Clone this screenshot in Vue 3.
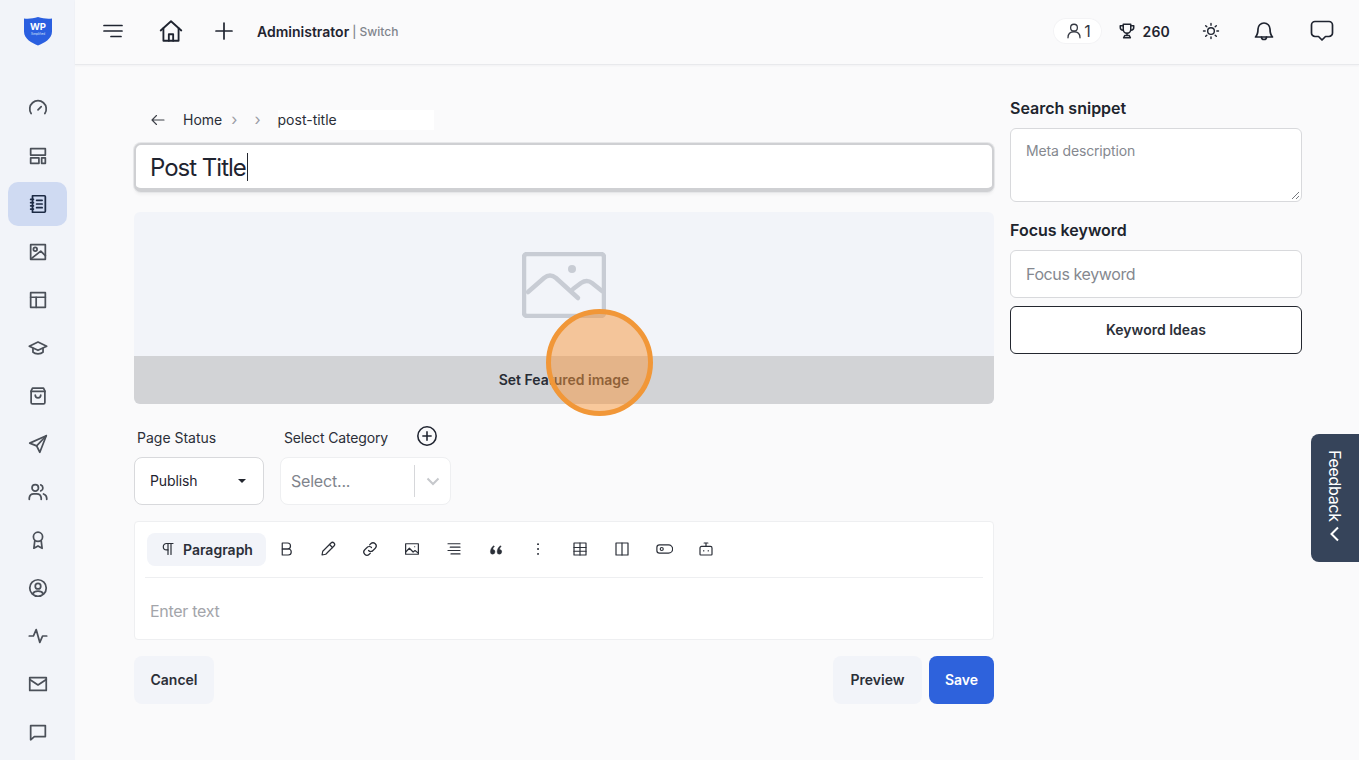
<script setup>
const navIcons = [
  ['M4.5 18a9 9 0 1 1 15 0', 'M12 14l3.5-3.5'],
  ['M4 4h16v7H4z', 'M4 14h9v6H4z', 'M16 14h4v6h-4z'],
  ['M6 3h13a1 1 0 0 1 1 1v16a1 1 0 0 1-1 1H6z', 'M4 7h3M4 10.5h3M4 14h3M4 17.5h3', 'M10.5 8h6M10.5 12h6M10.5 16h6'],
  ['M4 4h16v16H4z', 'M5 19L15 11l5 5', 'M9 9m-2 0a2 2 0 1 0 4 0a2 2 0 1 0-4 0'],
  ['M4 4h16v16H4z', 'M4 9h16', 'M10 9v11'],
  ['M2.5 10L12 5.5l9.5 4.500-9.5 4.500z', 'M6.5 12.500v4c2.500 2.500 8.500 2.500 11 0v-4'],
  ['M4.5 6.500L6 3.500h12l1.500 3V19a1.500 1.500 0 0 1-1.500 1.500H6A1.500 1.500 0 0 1 4.500 19z', 'M4.500 7h15', 'M9 11a3 3 0 0 0 6 0'],
  ['M3 11L21 3l-7 18-3.5-7z', 'M10.5 14L21 3'],
  ['M9 11a3.500 3.500 0 1 0 0-7a3.500 3.500 0 0 0 0 7z', 'M2.500 20v-1.500a5 5 0 0 1 5-4.500h3a5 5 0 0 1 5 4.500V20', 'M15 4.200a3.500 3.500 0 0 1 0 6.600', 'M18 14.200a5 5 0 0 1 3.500 4.300V20'],
  ['M12 13.500a5 5 0 1 0 0-10a5 5 0 0 0 0 10z', 'M8.500 13l-1 8 4.500-2.500 4.500 2.500-1-8'],
  ['M12 21a9 9 0 1 0 0-18a9 9 0 0 0 0 18z', 'M12 13a3 3 0 1 0 0-6a3 3 0 0 0 0 6z', 'M6.500 18c1-2 3-2.500 5.500-2.500s4.500.5 5.500 2.500'],
  ['M2.500 12h4.500l3-7 4 14 3-7h4.500'],
  ['M3 5h18v14H3z', 'M3 7l9 6 9-6'],
  ['M4 5h16v12H8l-4 3.500z'],
]
const activeNav = 2

const toolbarIcons = [
  { label: 'Bold', paths: ['M7 4h7a4 4 0 0 1 0 8H7z', 'M7 12h8a4 4 0 0 1 0 8H7z'] },
  { label: 'Highlight', paths: ['M4 20l1-5L16 4a2.100 2.100 0 0 1 4 4L9 19z', 'M14 6l4 4'] },
  { label: 'Link', paths: ['M10 14a4 4 0 0 0 6 0l3-3a4 4 0 0 0-6-6l-1.500 1.500', 'M14 10a4 4 0 0 0-6 0l-3 3a4 4 0 0 0 6 6l1.500-1.500'] },
  { label: 'Image', paths: ['M3.500 5h17v14h-17z', 'M3.500 16l5-5 5 5 2.500-2 4.500 3.500', 'M15.500 9h.1'] },
  { label: 'Align', paths: ['M4 5h16M7 9.500h13M4 14h16M8 18.500h12'] },
  { label: 'Quote', fill: true, paths: ['M10.500 16a3 3 0 0 1-6 0c0-4 2-7 4.500-8.500l1 1.200C8.500 10 8 11 7.900 12.500a3 3 0 0 1 2.600 3.500z', 'M19.500 16a3 3 0 0 1-6 0c0-4 2-7 4.500-8.500l1 1.200c-1.500 1.300-2 2.300-2.100 3.800a3 3 0 0 1 2.600 3.500z'] },
  { label: 'More', paths: ['M12 5.500h.1M12 12h.1M12 18.500h.1'], heavy: true },
  { label: 'Table', paths: ['M4 4h16v16H4z', 'M4 10h16M4 15h16', 'M12 4v16'] },
  { label: 'Columns', paths: ['M4 4h16v16H4z', 'M12 4v16'] },
  { label: 'Button', paths: ['M6 6.500h12a5 5 0 0 1 0 11H6a3.500 3.500 0 0 1-3.500-3.500v-4A3.500 3.500 0 0 1 6 6.500z', 'M9 12m-2 0a2 2 0 1 0 4 0a2 2 0 1 0-4 0'] },
  { label: 'AI', paths: ['M6 8.500h12a2 2 0 0 1 2 2V19a1 1 0 0 1-1 1H5a1 1 0 0 1-1-1v-8.500a2 2 0 0 1 2-2z', 'M12 8.500V4.500', 'M9.500 4h5', 'M9 14v.5M15 14v.5'] },
]
</script>

<template>
  <div class="shell">
    <aside class="sidebar">
      <div class="logo">
        <svg width="30" height="30" viewBox="0 0 30 30" aria-label="WP">
          <path d="M1 2.500C6 3 10 2.500 15 1c5 1.500 9 2 14 1.500v13C29 23 21 27 15 29.500 9 27 1 23 1 15.500z" fill="#2a5fe0" />
          <text x="15" y="14" class="logo-big">WP</text>
          <text x="15" y="18.500" class="logo-small">Simplified</text>
        </svg>
      </div>
      <nav class="nav">
        <a v-for="(paths, i) in navIcons" :key="i" class="nav-item" :class="{ active: i === activeNav }">
          <svg width="22" height="22" viewBox="0 0 24 24" class="line-icon">
            <path v-for="d in paths" :key="d" :d="d" />
          </svg>
        </a>
      </nav>
    </aside>

    <div class="page">
      <header class="topbar">
        <div class="top-left">
          <svg class="line-icon thin" width="24" height="24" viewBox="0 0 24 24">
            <path d="M3 6.500h18M3 12h18M10 17.500h10" />
          </svg>
          <svg class="home-icon line-icon thin" width="24" height="24" viewBox="0 0 24 24">
            <path d="M2.500 11.500L12 3l9.500 8.500" />
            <path d="M5 9.500V21h14V9.500" />
            <path d="M10 21v-6h4v6" />
          </svg>
          <svg class="plus-icon line-icon thin" width="24" height="24" viewBox="0 0 24 24">
            <path d="M12 4v16M4 12h16" />
          </svg>
          <span class="admin">Administrator</span>
          <span class="switch">| Switch</span>
        </div>
        <div class="top-right">
          <span class="pill">
            <svg class="line-icon thin" width="18" height="18" viewBox="0 0 24 24">
              <path d="M12 12a4.500 4.500 0 1 0 0-9a4.500 4.500 0 0 0 0 9z" />
              <path d="M4 21c0-5 3-8 8-8s8 3 8 8" />
            </svg>
            <span>1</span>
          </span>
          <span class="score">
            <svg class="line-icon" width="18" height="18" viewBox="0 0 24 24">
              <path d="M7 3h10v7a5 5 0 0 1-10 0z" />
              <path d="M7 5H3v2a4 4 0 0 0 4 4M17 5h4v2a4 4 0 0 1-4 4" />
              <path d="M12 15v3M7.500 21h9l-1.500-3H9z" />
            </svg>
            <span>260</span>
          </span>
          <svg class="sun-icon line-icon" width="20" height="20" viewBox="0 0 24 24">
            <path d="M12 16a4 4 0 1 0 0-8a4 4 0 0 0 0 8z" />
            <path d="M12 3v2M12 19v2M3 12h2M19 12h2M5.600 5.600L7 7M17 17l1.400 1.400M5.600 18.400L7 17M17 7l1.400-1.400" />
          </svg>
          <svg class="bell-icon line-icon thin" width="24" height="24" viewBox="0 0 24 24">
            <path d="M3.500 18c2-2 2.500-3.500 2.500-8a6 6 0 0 1 12 0c0 4.500.5 6 2.500 8z" />
            <path d="M9.500 18a2.500 2.500 0 0 0 5 0" />
          </svg>
          <svg class="chat-icon line-icon thin" width="26" height="26" viewBox="0 0 26 26">
            <path d="M6 3.500h14a3.500 3.500 0 0 1 3.500 3.500v8a3.500 3.500 0 0 1-3.500 3.500h-3.500L13 22l-3.500-3.500H6A3.500 3.500 0 0 1 2.500 15V7A3.500 3.500 0 0 1 6 3.500z" />
          </svg>
        </div>
      </header>

      <main class="content">
        <section class="editor">
          <div class="crumbs">
            <svg class="line-icon crumb-back" width="18" height="18" viewBox="0 0 24 24">
              <path d="M20 12H4M10 6l-6 6 6 6" />
            </svg>
            <span class="crumb">Home</span>
            <span class="chev">›</span>
            <span class="chev second">›</span>
            <span class="slug">post-title</span>
          </div>

          <div class="title-input">Post Title<i class="caret" /></div>

          <div class="featured">
            <div class="featured-art">
              <svg width="84" height="66" viewBox="0 0 84 66" class="art-icon">
                <rect x="2" y="2" width="80" height="62" rx="3" />
                <path d="M6 40L22 26q6-5 12 0l22 20" />
                <path d="M51 37l8-6q6-4 11 0l10 8" />
                <circle cx="50" cy="17" r="4" fill="#c8ccd4" stroke="none" />
              </svg>
            </div>
            <div class="featured-bar">Set Featured image</div>
            <div class="pointer" />
          </div>

          <div class="selectors">
            <div class="field status">
              <label>Page Status</label>
              <div class="status-select"><span>Publish</span><b class="arrow" /></div>
            </div>
            <div class="field category">
              <div class="cat-head">
                <label>Select Category</label>
                <svg class="line-icon thin" width="22" height="22" viewBox="0 0 24 24">
                  <circle cx="12" cy="12" r="10" />
                  <path d="M12 7.500v9M7.500 12h9" />
                </svg>
              </div>
              <div class="cat-select">
                <span>Select...</span>
                <i class="divider" />
                <svg class="cat-chevron" width="20" height="20" viewBox="0 0 20 20">
                  <path d="M4.500 7.500L10 13l5.500-5.500" />
                </svg>
              </div>
            </div>
          </div>

          <div class="body-box">
            <div class="toolbar">
              <button class="para">
                <svg class="line-icon para-mark" width="14" height="14" viewBox="0 0 14 14">
                  <path d="M12 1.500H5.500a3.200 3.200 0 0 0 0 6.400H7" />
                  <path d="M7 1.500v11M10 1.500v11" />
                </svg>
                <span>Paragraph</span>
              </button>
              <span v-for="tool in toolbarIcons" :key="tool.label" class="tool" :title="tool.label">
                <svg width="18" height="18" viewBox="0 0 24 24" class="line-icon" :class="{ solid: tool.fill, heavy: tool.heavy }">
                  <path v-for="d in tool.paths" :key="d" :d="d" />
                </svg>
              </span>
            </div>
            <div class="body-text">Enter text</div>
          </div>

          <div class="actions">
            <button class="btn soft">Cancel</button>
            <div class="spacer" />
            <button class="btn soft preview">Preview</button>
            <button class="btn primary">Save</button>
          </div>
        </section>

        <aside class="seo">
          <h3>Search snippet</h3>
          <div class="meta">Meta description
            <svg class="grip" width="10" height="10" viewBox="0 0 10 10"><path d="M9 2L2 9M9 6L6 9" /></svg>
          </div>
          <h3 class="second">Focus keyword</h3>
          <div class="keyword">Focus keyword</div>
          <button class="ideas">Keyword Ideas</button>
        </aside>
      </main>
    </div>

    <div class="feedback">
      <span>Feedback</span>
      <svg width="18" height="18" viewBox="0 0 18 18"><path d="M12 2.500L5.500 9l6.500 6.500" /></svg>
    </div>
  </div>
</template>

<style>
html, body { margin: 0; background: #fafafb; }
</style>

<style scoped>
.shell {
  display: flex;
  height: 760px;
  overflow: hidden;
  position: relative;
  font-family: Inter, "Liberation Sans", sans-serif;
  color: #1f2430;
  background: #fafafb;
}
.sidebar {
  width: 75px;
  flex: none;
  background: #f2f4f9;
  display: flex;
  flex-direction: column;
  align-items: center;
}
.logo {
  height: 86px;
  width: 100%;
  display: flex;
  justify-content: center;
  padding-top: 16px;
  box-sizing: border-box;
}
.logo-big { font: 700 9.5px Inter, sans-serif; fill: #fff; text-anchor: middle; }
.logo-small { font: 400 3px Inter, sans-serif; fill: #dfe7fb; text-anchor: middle; }
.nav { display: flex; flex-direction: column; }
.nav-item {
  width: 59px;
  height: 44px;
  margin-bottom: 4px;
  border-radius: 10px;
  display: flex;
  align-items: center;
  justify-content: center;
}
.nav-item.active { background: #cfdaf2; }
.nav-item svg { stroke: #4b5059; stroke-width: 1.9; }
.nav-item.active svg { stroke: #1c2a44; }
.line-icon {
  fill: none;
  stroke: currentColor;
  stroke-width: 2;
  stroke-linecap: round;
  stroke-linejoin: round;
  display: block;
}
.line-icon.thin { stroke-width: 1.7; }
.line-icon.solid { fill: currentColor; stroke-width: 0.5; }
.line-icon.heavy { stroke-width: 2.6; }

.page { flex: 1; min-width: 0; }
.topbar {
  height: 65px;
  box-sizing: border-box;
  border-bottom: 1px solid #e8e9ec;
  box-shadow: 0 1px 2px rgba(30, 35, 50, 0.04);
  display: flex;
  align-items: center;
  justify-content: space-between;
  padding: 0 24px 2px 26px;
}
.top-left, .top-right { display: flex; align-items: center; }
.home-icon { margin-left: 33px; width: 26px; height: 26px; }
.plus-icon { margin-left: 28px; }
.admin { margin-left: 21px; font-size: 14px; font-weight: 600; }
.switch { margin-left: 3px; font-size: 12px; font-weight: 500; color: #80848c; margin-top: 1px; }
.pill {
  background: #fff;
  border-radius: 13px;
  height: 26px;
  width: 49px;
  box-sizing: border-box;
  display: flex;
  align-items: center;
  justify-content: center;
  gap: 1px;
  font-size: 16px;
  color: #343842;
  box-shadow: inset 0 0 0 1px #f3f3f5;
}
.score {
  margin-left: 16px;
  display: flex;
  align-items: center;
  gap: 6px;
  font-size: 14px;
  letter-spacing: 0.2px;
  font-weight: 600;
}
.sun-icon { margin-left: 31px; stroke-width: 1.7; }
.bell-icon { margin-left: 31px; }
.chat-icon { margin-left: 33px; }

.content {
  display: flex;
  align-items: flex-start;
  gap: 16px;
  padding: 0 57px 0 59px;
}
.editor { width: 860px; flex: none; }
.crumbs {
  height: 78px;
  padding-top: 45px;
  box-sizing: border-box;
  display: flex;
  align-items: flex-start;
  font-size: 14px;
  line-height: 20px;
  color: #2b2f38;
}
.crumb-back { margin: 1px 0 0 15px; stroke-width: 1.5; color: #3c4048; }
.crumb { margin-left: 16px; }
.chev { margin-left: 9px; color: #9a9da5; font-size: 16px; line-height: 18px; }
.chev.second { margin-left: 17px; }
.slug {
  margin-left: 17px;
  width: 156px;
  background: #fff;
  box-sizing: border-box;
  height: 20px;
}
.title-input {
  height: 49px;
  box-sizing: border-box;
  background: #fff;
  border: 2px solid #cfd0d3;
  border-bottom-width: 4px;
  border-radius: 7px;
  box-shadow: 0 0 0 1px #e6e7e9, 0 3px 3px rgba(0, 0, 0, 0.04);
  padding: 1px 0 0 14px;
  font-size: 24px;
  letter-spacing: -1px;
  display: flex;
  align-items: center;
}
.caret {
  display: inline-block;
  width: 1px;
  height: 28px;
  background: #23272f;
  margin-left: 1px;
}
.featured {
  margin-top: 20px;
  height: 192px;
  border-radius: 6px;
  position: relative;
  background: #f2f4f9;
  display: flex;
  flex-direction: column;
}
.featured-art {
  height: 144px;
  box-sizing: border-box;
  padding: 40px 0 0 0;
  display: flex;
  justify-content: center;
}
.art-icon { fill: none; stroke: #c8ccd4; stroke-width: 4.5; stroke-linecap: round; stroke-linejoin: round; }
.featured-bar {
  height: 48px;
  background: #d2d3d6;
  border-radius: 0 0 6px 6px;
  font-size: 14px;
  font-weight: 600;
  line-height: 47px;
  text-align: center;
  color: #282c35;
}
.pointer {
  position: absolute;
  left: 412px;
  top: 97px;
  width: 107px;
  height: 107px;
  box-sizing: border-box;
  border-radius: 50%;
  border: 5px solid #f19738;
  background: rgba(245, 150, 60, 0.5);
}
.selectors { display: flex; margin-top: 21px; }
.field label { font-size: 14px; line-height: 24px; color: #2b2f38; }
.status { width: 146px; }
.status label { padding-left: 3px; display: block; margin-top: 1px; }
.status-select {
  margin-top: 7px;
  width: 130px;
  height: 48px;
  box-sizing: border-box;
  background: #fff;
  border: 1px solid #d8d9dc;
  border-radius: 8px;
  padding: 0 17px 2px 15px;
  display: flex;
  align-items: center;
  justify-content: space-between;
  font-size: 14px;
  letter-spacing: -0.1px;
}
.arrow {
  width: 0;
  height: 0;
  border-left: 4px solid transparent;
  border-right: 4px solid transparent;
  border-top: 4px solid #23272f;
  margin-top: 2px;
}
.cat-head { display: flex; align-items: center; height: 32px; padding-left: 4px; gap: 28px; margin-top: -3px; margin-bottom: 3px; }
.cat-head label { letter-spacing: -0.15px; }
.cat-head svg { margin-top: -4px; }
.cat-select {
  width: 171px;
  height: 48px;
  box-sizing: border-box;
  background: #fff;
  border: 1px solid #eeeff1;
  border-radius: 8px;
  padding: 0 0 1px 10px;
  display: flex;
  align-items: center;
  font-size: 16px;
  letter-spacing: -0.2px;
  color: #80848c;
}
.cat-select span { width: 123px; flex: none; }
.divider { width: 1px; height: 32px; background: #d6d7da; flex: none; }
.cat-chevron { margin-left: 8px; fill: none; stroke: #c6c8cc; stroke-width: 2; }
.body-box {
  margin-top: 16px;
  height: 119px;
  box-sizing: border-box;
  background: #fff;
  border: 1px solid #eeeff1;
  border-radius: 4px;
  padding: 0 10px;
}
.toolbar {
  height: 56px;
  box-sizing: border-box;
  display: flex;
  align-items: center;
  border-bottom: 1px solid #eeeff1;
  padding: 0 2px 1px;
}
.para {
  width: 119px;
  height: 33px;
  background: #f2f4f9;
  border: none;
  border-radius: 8px;
  font: 600 14px Inter, sans-serif;
  color: #2b2f38;
  display: flex;
  align-items: center;
  padding: 0 0 0 14px;
  gap: 8px;
  margin-right: -1px;
}
.para-mark { stroke-width: 1.2; }
.tool {
  width: 42px;
  display: flex;
  justify-content: center;
  color: #2b2f38;
}
.tool .line-icon { stroke-width: 1.6; }
.tool .line-icon.heavy { stroke-width: 2.6; }
.tool .line-icon.solid { stroke-width: 0.5; }
.body-text {
  padding: 23px 5px 0;
  font-size: 16px;
  letter-spacing: -0.3px;
  line-height: 20px;
  color: #a3a5aa;
}
.actions { display: flex; margin-top: 16px; }
.spacer { flex: 1; }
.btn {
  height: 48px;
  border: none;
  border-radius: 8px;
  font: 600 14px Inter, sans-serif;
  padding-bottom: 3px;
}
.btn.soft { background: #f2f4f9; color: #2b2f38; width: 80px; }
.btn.preview { width: 89px; margin-right: 7px; }
.btn.primary { background: #2e62dc; color: #fff; width: 65px; }

.seo { width: 292px; flex: none; padding-top: 33px; }
.seo h3 { margin: 0; font-size: 16px; font-weight: 600; line-height: 20px; color: #20242d; }
.seo h3.second { margin-top: 18px; }
.meta {
  margin-top: 10px;
  height: 74px;
  box-sizing: border-box;
  background: #fff;
  border: 1px solid #d8d9dc;
  border-radius: 6px;
  padding: 13px 15px;
  font-size: 14px;
  letter-spacing: -0.15px;
  line-height: 18px;
  color: #85888f;
  position: relative;
}
.grip { position: absolute; right: 1px; bottom: 1px; fill: none; stroke: #777a80; stroke-width: 1; }
.keyword {
  margin-top: 10px;
  height: 48px;
  box-sizing: border-box;
  background: #fff;
  border: 1px solid #d8d9dc;
  border-radius: 6px;
  padding: 0 15px;
  display: flex;
  align-items: center;
  font-size: 16px;
  letter-spacing: -0.4px;
  color: #85888f;
}
.ideas {
  margin-top: 8px;
  width: 100%;
  height: 48px;
  background: #fff;
  border: 1px solid #23272f;
  border-radius: 6px;
  font: 600 14px Inter, sans-serif;
  color: #2b2f38;
  padding-bottom: 2px;
}
.feedback {
  position: absolute;
  right: 0;
  top: 434px;
  width: 48px;
  height: 128px;
  box-sizing: border-box;
  background: #36445a;
  border-radius: 8px 0 0 8px;
  display: flex;
  flex-direction: column;
  align-items: center;
  padding-top: 16px;
  color: #fff;
  font-size: 16px;
  letter-spacing: -0.3px;
}
.feedback span { writing-mode: vertical-rl; line-height: 20px; }
.feedback svg { fill: none; stroke: #fff; stroke-width: 2; margin-top: 3px; }
</style>
